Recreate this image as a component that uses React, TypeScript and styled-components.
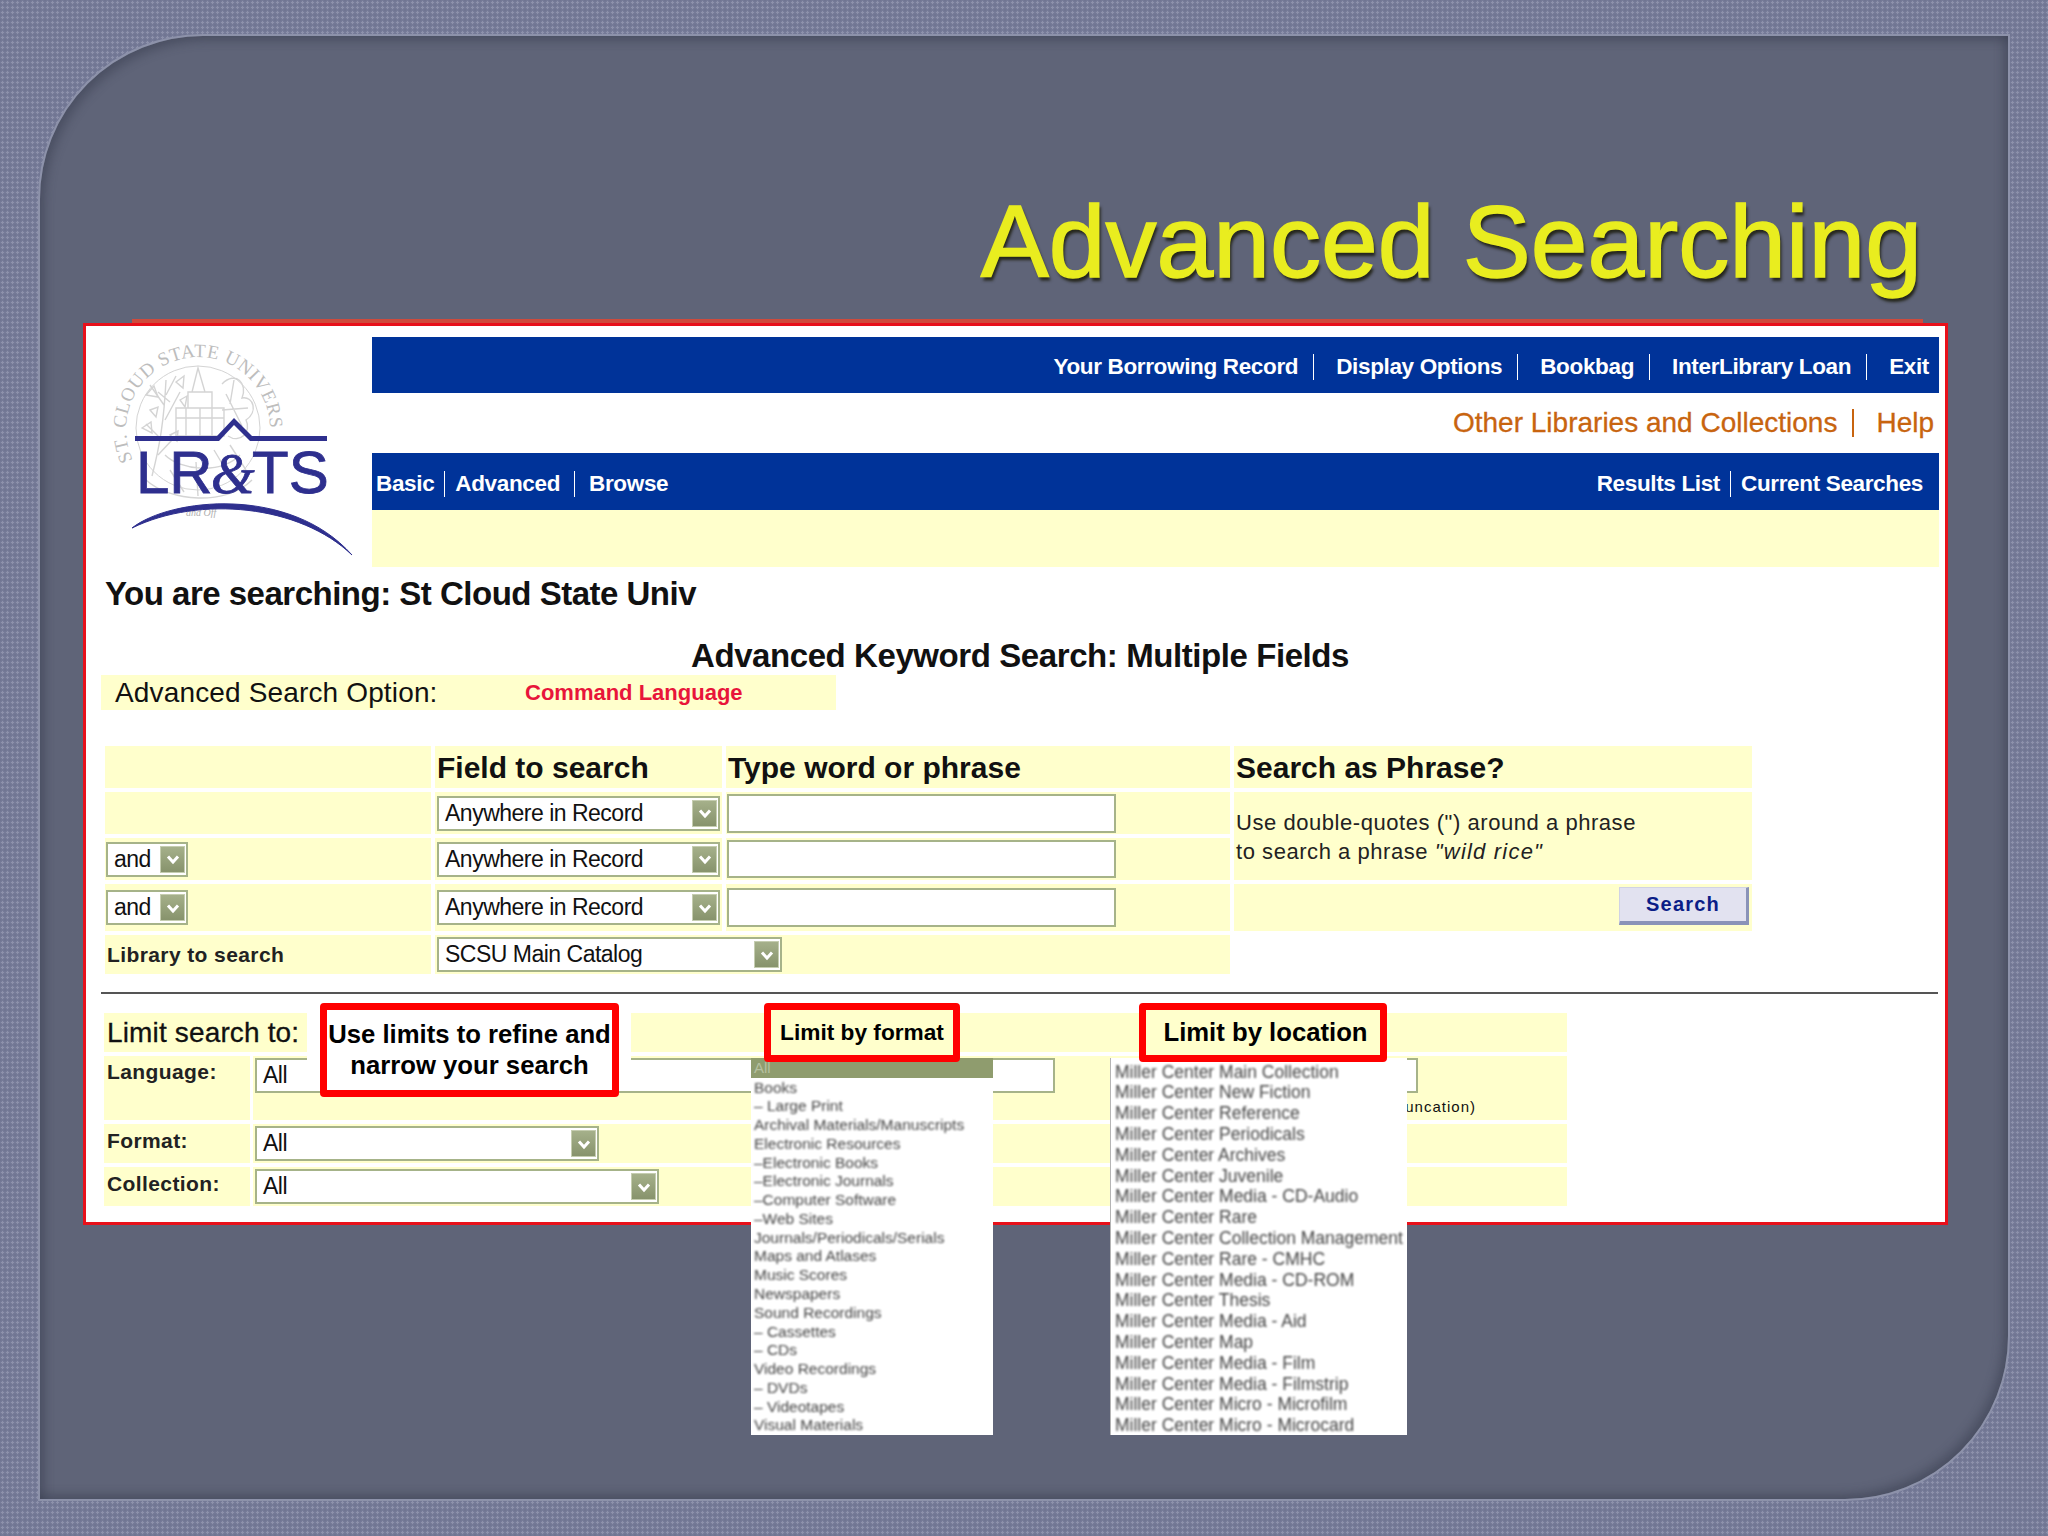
import React from 'react';
import styled, { createGlobalStyle } from 'styled-components';

const SANS = `"Liberation Sans", Arial, sans-serif`;
const SERIF = `"Liberation Serif", serif`;
const CREAM = '#ffffcc';
const SAGE = '#a6b389';

const GlobalStyle = createGlobalStyle`
  html, body {
    margin: 0;
    padding: 0;
  }
  body {
    font-family: ${SANS};
    color: #111;
  }
`;

const Page = styled.div`
  width: 2048px;
  height: 1536px;
  box-sizing: border-box;
  padding: 34px 38px 35px;
  background-color: #767b98;
  background-image:
    radial-gradient(circle, #8d91ab 1px, transparent 1.4px),
    radial-gradient(circle, #6e7390 1px, transparent 1.4px);
  background-size: 5px 5px;
  background-position: 0 0, 2.5px 2.5px;
  overflow: hidden;
`;

const Panel = styled.div`
  width: 1972px;
  height: 1467px;
  box-sizing: border-box;
  padding-left: 43px;
  background: #5f6478;
  border: 2px solid #8d92aa;
  border-radius: 165px 0 165px 0;
  box-shadow: inset 5px 5px 10px rgba(50, 54, 72, 0.4), inset -5px -5px 10px rgba(50, 54, 72, 0.4);
`;

const Title = styled.h1`
  margin: 0;
  height: 287px;
  box-sizing: border-box;
  padding: 146px 86px 0 0;
  text-align: right;
  font-size: 102px;
  line-height: 120px;
  font-weight: 400;
  color: #e9ed1f;
  -webkit-text-stroke: 1.5px #e9ed1f;
  text-shadow: 2px 4px 3px #25261c;
`;

const Card = styled.div`
  position: relative;
  width: 1865px;
  height: 902px;
  box-sizing: border-box;
  border: 3px solid #e8101a;
  background: #fff;

  &::before {
    content: '';
    position: absolute;
    top: -7px;
    left: 46px;
    right: 22px;
    height: 4px;
    background: #cf4a3c;
  }
`;

const Header = styled.div`
  display: flex;
  height: 241px;
`;

const Logo = styled.svg`
  display: block;
  width: 286px;
  height: 241px;
  flex: none;
`;

const HeaderRight = styled.div`
  flex: none;
  width: 1567px;
  padding-top: 11px;
`;

const BlueBar = styled.div<{ $h: number; $align: string; $pad: string }>`
  height: ${(p) => p.$h}px;
  box-sizing: border-box;
  padding: ${(p) => p.$pad};
  background: #003399;
  display: flex;
  align-items: center;
  justify-content: ${(p) => p.$align};
`;

const NavGroup = styled.div`
  display: flex;
  align-items: center;
`;

const NavLink = styled.span<{ $gap?: number }>`
  color: #fff;
  font-size: 22.5px;
  letter-spacing: -0.35px;
  font-weight: 700;
  line-height: 26px;
  white-space: nowrap;
  padding-right: ${(p) => p.$gap ?? 15}px;
  margin-right: ${(p) => p.$gap ?? 22}px;
  border-right: 1px solid #fff;

  &:last-child {
    padding-right: 0;
    margin-right: 0;
    border-right: 0;
  }
`;

const OtherRow = styled.div`
  height: 60px;
  box-sizing: border-box;
  padding-right: 5px;
  display: flex;
  align-items: center;
  justify-content: flex-end;
`;

const OtherLink = styled.span`
  color: #c8640f;
  font-size: 28px;
  -webkit-text-stroke: 0.3px #c8640f;
  font-weight: 400;
  line-height: 28px;
  white-space: nowrap;
  padding-right: 15px;
  margin-right: 22px;
  border-right: 2px solid #c8640f;

  &:last-child {
    padding-right: 0;
    margin-right: 0;
    border-right: 0;
  }
`;

const CreamStrip = styled.div`
  height: 57px;
  background: ${CREAM};
`;

const Searching = styled.div`
  height: 54px;
  box-sizing: border-box;
  padding-left: 19px;
  font-size: 33px;
  letter-spacing: -0.5px;
  font-weight: 700;
  line-height: 54px;
`;

const SearchHeading = styled.div`
  height: 54px;
  box-sizing: border-box;
  padding: 15px 0 0 9px;
  text-align: center;
  font-size: 33px;
  letter-spacing: -0.42px;
  font-weight: 700;
  line-height: 39px;
`;

const OptionRow = styled.div`
  margin: 0 0 36px 15px;
  width: 735px;
  height: 35px;
  box-sizing: border-box;
  padding-left: 14px;
  background: ${CREAM};
  display: flex;
  align-items: center;
`;

const OptionLabel = styled.span`
  width: 410px;
  font-size: 28px;
  letter-spacing: 0.15px;
`;

const OptionLink = styled.span`
  color: #e8153a;
  font-size: 22px;
  font-weight: 700;
`;

const SearchGrid = styled.div`
  margin-left: 19px;
  display: grid;
  grid-template-columns: 326px 287px 504px 518px;
  grid-template-rows: 42px 42px 42px 47px 39px;
  gap: 4px;
`;

const Cell = styled.div<{ $span?: number; $rows?: number; $pad?: string }>`
  background: ${CREAM};
  box-sizing: border-box;
  padding: ${(p) => p.$pad ?? '0 2px'};
  display: flex;
  align-items: center;
  grid-column: span ${(p) => p.$span ?? 1};
  grid-row: span ${(p) => p.$rows ?? 1};
`;

const ColumnTitle = styled.span`
  font-size: 30px;
  font-weight: 700;
  white-space: nowrap;
  padding-top: 2px;
`;

const RowLabel = styled.span`
  font-size: 21px;
  font-weight: 700;
  white-space: nowrap;
  color: #222;
  letter-spacing: 0.4px;
`;

const SelectBox = styled.div<{ $w: number }>`
  width: ${(p) => p.$w}px;
  height: 35px;
  flex: none;
  box-sizing: border-box;
  border: 2px solid ${SAGE};
  background: #fff;
  padding: 0 1px 0 6px;
  display: flex;
  align-items: center;
  justify-content: space-between;
  font-size: 23px;
  letter-spacing: -0.5px;
  color: #111;
`;

const ArrowButton = styled.div`
  width: 25px;
  height: 27px;
  flex: none;
  box-sizing: border-box;
  border: 1px solid #c5cdb0;
  background: linear-gradient(#a5b08a, #87936c);
  display: flex;
  align-items: center;
  justify-content: center;
`;

const TextField = styled.div<{ $h: number }>`
  width: 389px;
  height: ${(p) => p.$h}px;
  box-sizing: border-box;
  border: 2px solid ${SAGE};
  background: #fff;
`;

const HelpText = styled.p`
  margin: 2px 0 0;
  font-size: 22px;
  line-height: 29px;
  letter-spacing: 0.55px;
  color: #222;

  em {
    letter-spacing: 1.2px;
  }
`;

const SearchRow = styled(Cell)`
  justify-content: flex-end;
`;

const SearchButton = styled.button`
  width: 130px;
  height: 38px;
  margin-bottom: 3px;
  padding: 0;
  border: 0;
  border-right: 3px solid #8a93b8;
  border-bottom: 4px solid #8a93b8;
  border-top: 1px solid #d0d2e4;
  border-left: 1px solid #d0d2e4;
  background: #e2e2f0;
  color: #0b1d87;
  font-family: ${SANS};
  font-size: 20px;
  font-weight: 700;
  letter-spacing: 1.2px;
`;

const Rule = styled.div`
  margin: 18px 7px 19px 15px;
  height: 2px;
  background: #555;
`;

const LimitGrid = styled.div`
  margin-left: 18px;
  width: 1463px;
  display: grid;
  grid-template-columns: 146px 1314px;
  grid-template-rows: 39px 64px 39px 39px;
  gap: 4px 3px;
`;

const LimitBand = styled(Cell)`
  font-size: 28px;
  letter-spacing: 0.15px;
  -webkit-text-stroke: 0.3px #111;
  padding-left: 3px;
`;

const LimitLabel = styled(Cell)`
  align-items: flex-start;
  padding: 4px 0 0 3px;
`;

const SideLabel = styled(Cell)`
  padding: 0 0 5px 3px;
`;

const LanguageCell = styled(Cell)`
  align-items: flex-start;
  padding: 2px 0 0 2px;
`;

const LocationColumn = styled.div`
  margin-left: 70px;
  width: 351px;
  display: flex;
  flex-direction: column;
`;

const Hint = styled.div`
  margin-top: 4px;
  line-height: 20px;
  font-size: 15px;
  letter-spacing: 1px;
  text-align: right;
  white-space: nowrap;
`;

const Mask = styled.div`
  position: absolute;
  left: 221px;
  top: 684px;
  width: 324px;
  height: 80px;
  background: #fff;
`;

const Callout = styled.div<{ $x: number; $w: number; $h: number; $bg: string; $size: number; $shift?: number }>`
  position: absolute;
  z-index: 2;
  left: ${(p) => p.$x}px;
  top: 677px;
  width: ${(p) => p.$w}px;
  height: ${(p) => p.$h}px;
  box-sizing: border-box;
  border: 7px solid #ff0000;
  border-radius: 4px;
  padding-left: ${(p) => p.$shift ?? 0}px;
  background: ${(p) => p.$bg};
  display: flex;
  align-items: center;
  justify-content: center;
  text-align: center;
  white-space: nowrap;
  color: #000;
  font-size: ${(p) => p.$size}px;
  line-height: 31px;
  font-weight: 700;
`;

const Dropdown = styled.div<{ $x: number; $w: number }>`
  position: absolute;
  z-index: 1;
  left: ${(p) => p.$x}px;
  top: 732px;
  width: ${(p) => p.$w}px;
  height: 377px;
  background: #fff;
  overflow: hidden;
`;

const LocationDropdown = styled(Dropdown)`
  box-sizing: border-box;
  border-left: 1px solid #b5b5b5;
`;

const ListBody = styled.div<{ $pad: string }>`
  padding: ${(p) => p.$pad};
  filter: blur(0.8px);
`;

const ListHighlight = styled.div`
  height: 20px;
  padding-left: 3px;
  background: #8f9c6e;
  color: #b6c0a0;
  font-size: 15px;
  line-height: 20px;
`;

const ListItem = styled.div<{ $h: number; $size: number }>`
  height: ${(p) => p.$h}px;
  line-height: ${(p) => p.$h}px;
  font-size: ${(p) => p.$size}px;
  color: #444;
  white-space: nowrap;
`;

const Chevron = () => (
  <svg width="18" height="18" viewBox="0 0 18 18" fill="none">
    <path d="M4 6.5 L9 12 L14 6.5" stroke="#fff" strokeWidth="3" />
  </svg>
);

const Select: React.FC<{ w: number; plain?: boolean; children?: React.ReactNode }> = ({ w, plain, children }) => (
  <SelectBox $w={w}>
    <span>{children}</span>
    {!plain && (
      <ArrowButton>
        <Chevron />
      </ArrowButton>
    )}
  </SelectBox>
);

const SealAndMark = () => (
  <Logo viewBox="86 326 286 241">
    <defs>
      <path id="sealText" d="M 133 460 A 72 72 0 1 1 270 432" />
    </defs>
    <g fill="none" stroke="#d4d4d4" strokeWidth="1.4">
      <circle cx="198" cy="428" r="62" strokeWidth="1" />
      {/* laurel on the left */}
      <path d="M152 476 C160 445 164 420 166 380 M164 405 L150 385 M165 420 L180 392 M162 440 L146 424 M166 395 L176 376 M158 392 L170 402 M158 455 L172 440" />
      <path d="M146 395 l8 -9 l4 11 z M176 382 l8 -6 l-1 12 z M142 428 l9 -6 l1 11 z M180 400 l7 -4 l-2 11 z M150 410 l8 -3 l-2 10 z M170 435 l8 -4 l-1 10 z" />
      {/* tower and hall in the middle */}
      <path d="M198 368 L205 392 L192 392 Z M188 392 H212 V408 H188 Z M176 408 H224 V436 H176 Z M176 418 H224 M186 408 V436 M200 408 V436 M212 408 V436" />
      {/* oak leaves on the right */}
      <path d="M222 384 C236 370 248 384 242 398 C254 396 258 412 246 420 C252 432 240 444 228 436 M226 394 L242 426 M234 380 L230 404 M222 410 L248 408" />
      {/* ground */}
      <path d="M146 480 C170 502 226 506 252 480 M165 455 C180 470 220 475 240 455 M230 445 L246 470 M214 450 L232 480 M170 470 L184 492 M196 462 L198 496" />
    </g>
    <text fontFamily={SERIF} fontSize="19" fill="#bdbdbd" letterSpacing="0.6">
      <textPath href="#sealText">ST. CLOUD STATE UNIVERS</textPath>
    </text>
    <text x="186" y="516" fontFamily={SERIF} fontStyle="italic" fontSize="10" fill="#b0b0b0">and Off</text>
    <path d="M135 436 H217 L234 418 L252 436 H327 V441 H250 L234 425 L219 441 H135 Z" fill="#2e2f8e" />
    <text x="136" y="493" fontFamily={SANS} fontSize="60" fill="#2e2f8e" stroke="#2e2f8e" strokeWidth="0.8">
      LR
      <tspan x="211" fontFamily={SERIF} fontStyle="italic" fontSize="56">&amp;</tspan>
      <tspan x="252">TS</tspan>
    </text>
    <path d="M132 528 C170 498 290 485 352 555 C300 505 200 495 132 528 Z" fill="#2e2f8e" stroke="#2e2f8e" strokeWidth="1" />
  </Logo>
);

const FORMATS = [
  'Books',
  '– Large Print',
  'Archival Materials/Manuscripts',
  'Electronic Resources',
  '–Electronic Books',
  '–Electronic Journals',
  '–Computer Software',
  '–Web Sites',
  'Journals/Periodicals/Serials',
  'Maps and Atlases',
  'Music Scores',
  'Newspapers',
  'Sound Recordings',
  '– Cassettes',
  '– CDs',
  'Video Recordings',
  '– DVDs',
  '– Videotapes',
  'Visual Materials',
];

const LOCATIONS = [
  'Main Collection',
  'New Fiction',
  'Reference',
  'Periodicals',
  'Archives',
  'Juvenile',
  'Media - CD-Audio',
  'Rare',
  'Collection Management',
  'Rare - CMHC',
  'Media - CD-ROM',
  'Thesis',
  'Media - Aid',
  'Map',
  'Media - Film',
  'Media - Filmstrip',
  'Micro - Microfilm',
  'Micro - Microcard',
];

const App: React.FC = () => (
  <Page>
    <GlobalStyle />
    <Panel>
      <Title>Advanced Searching</Title>
      <Card>
        <Header>
          <SealAndMark />
          <HeaderRight>
            <BlueBar $h={56} $align="flex-end" $pad="4px 10px 0 0">
              <NavLink>Your Borrowing Record</NavLink>
              <NavLink>Display Options</NavLink>
              <NavLink>Bookbag</NavLink>
              <NavLink>InterLibrary Loan</NavLink>
              <NavLink>Exit</NavLink>
            </BlueBar>
            <OtherRow>
              <OtherLink>Other Libraries and Collections</OtherLink>
              <OtherLink>Help</OtherLink>
            </OtherRow>
            <BlueBar $h={57} $align="space-between" $pad="4px 16px 0 4px">
              <NavGroup>
                <NavLink $gap={10}>Basic</NavLink>
                <NavLink $gap={14}>Advanced</NavLink>
                <NavLink>Browse</NavLink>
              </NavGroup>
              <NavGroup>
                <NavLink $gap={10}>Results List</NavLink>
                <NavLink>Current Searches</NavLink>
              </NavGroup>
            </BlueBar>
            <CreamStrip />
          </HeaderRight>
        </Header>

        <Searching>You are searching: St Cloud State Univ</Searching>
        <SearchHeading>Advanced Keyword Search: Multiple Fields</SearchHeading>
        <OptionRow>
          <OptionLabel>Advanced Search Option:</OptionLabel>
          <OptionLink>Command Language</OptionLink>
        </OptionRow>

        <SearchGrid>
          <Cell />
          <Cell><ColumnTitle>Field to search</ColumnTitle></Cell>
          <Cell><ColumnTitle>Type word or phrase</ColumnTitle></Cell>
          <Cell><ColumnTitle>Search as Phrase?</ColumnTitle></Cell>

          <Cell />
          <Cell><Select w={283}>Anywhere in Record</Select></Cell>
          <Cell $pad="0 1px"><TextField $h={39} /></Cell>
          <Cell $rows={2}>
            <HelpText>
              Use double-quotes (&quot;) around a phrase
              <br />
              to search a phrase <em>&quot;wild rice&quot;</em>
            </HelpText>
          </Cell>

          <Cell $pad="0 1px"><Select w={82}>and</Select></Cell>
          <Cell><Select w={283}>Anywhere in Record</Select></Cell>
          <Cell $pad="0 1px"><TextField $h={38} /></Cell>

          <Cell $pad="0 1px"><Select w={82}>and</Select></Cell>
          <Cell><Select w={283}>Anywhere in Record</Select></Cell>
          <Cell $pad="0 1px"><TextField $h={39} /></Cell>
          <SearchRow $pad="0 3px 0 0"><SearchButton>Search</SearchButton></SearchRow>

          <Cell><RowLabel>Library to search</RowLabel></Cell>
          <Cell $span={2}><Select w={345}>SCSU Main Catalog</Select></Cell>
        </SearchGrid>

        <Rule />

        <LimitGrid>
          <LimitBand $span={2}>Limit search to:</LimitBand>

          <LimitLabel><RowLabel>Language:</RowLabel></LimitLabel>
          <LanguageCell>
            <Select w={800} plain>All</Select>
            <LocationColumn>
              <Select w={293} plain />
              <Hint>(use * for truncation)</Hint>
            </LocationColumn>
          </LanguageCell>

          <SideLabel><RowLabel>Format:</RowLabel></SideLabel>
          <Cell><Select w={344}>All</Select></Cell>

          <SideLabel><RowLabel>Collection:</RowLabel></SideLabel>
          <Cell><Select w={404}>All</Select></Cell>
        </LimitGrid>

        <Mask />
        <Callout $x={234} $w={299} $h={94} $bg="#fff" $size={25.7}>
          <span>
            Use limits to refine and
            <br />
            narrow your search
          </span>
        </Callout>
        <Callout $x={678} $w={196} $h={59} $bg={CREAM} $size={22.7}>Limit by format</Callout>
        <Callout $x={1053} $w={248} $h={59} $bg={CREAM} $size={25.7} $shift={5}>Limit by location</Callout>

        <Dropdown $x={665} $w={242}>
          <ListHighlight>All</ListHighlight>
          <ListBody $pad="0.6px 0 0 3px">
            {FORMATS.map((f) => (
              <ListItem key={f} $h={18.78} $size={15.5}>{f}</ListItem>
            ))}
          </ListBody>
        </Dropdown>
        <LocationDropdown $x={1024} $w={297}>
          <ListBody $pad="3.6px 0 0 4px">
            {LOCATIONS.map((l) => (
              <ListItem key={l} $h={20.8} $size={17.5}>Miller Center {l}</ListItem>
            ))}
          </ListBody>
        </LocationDropdown>
      </Card>
    </Panel>
  </Page>
);

export default App;
